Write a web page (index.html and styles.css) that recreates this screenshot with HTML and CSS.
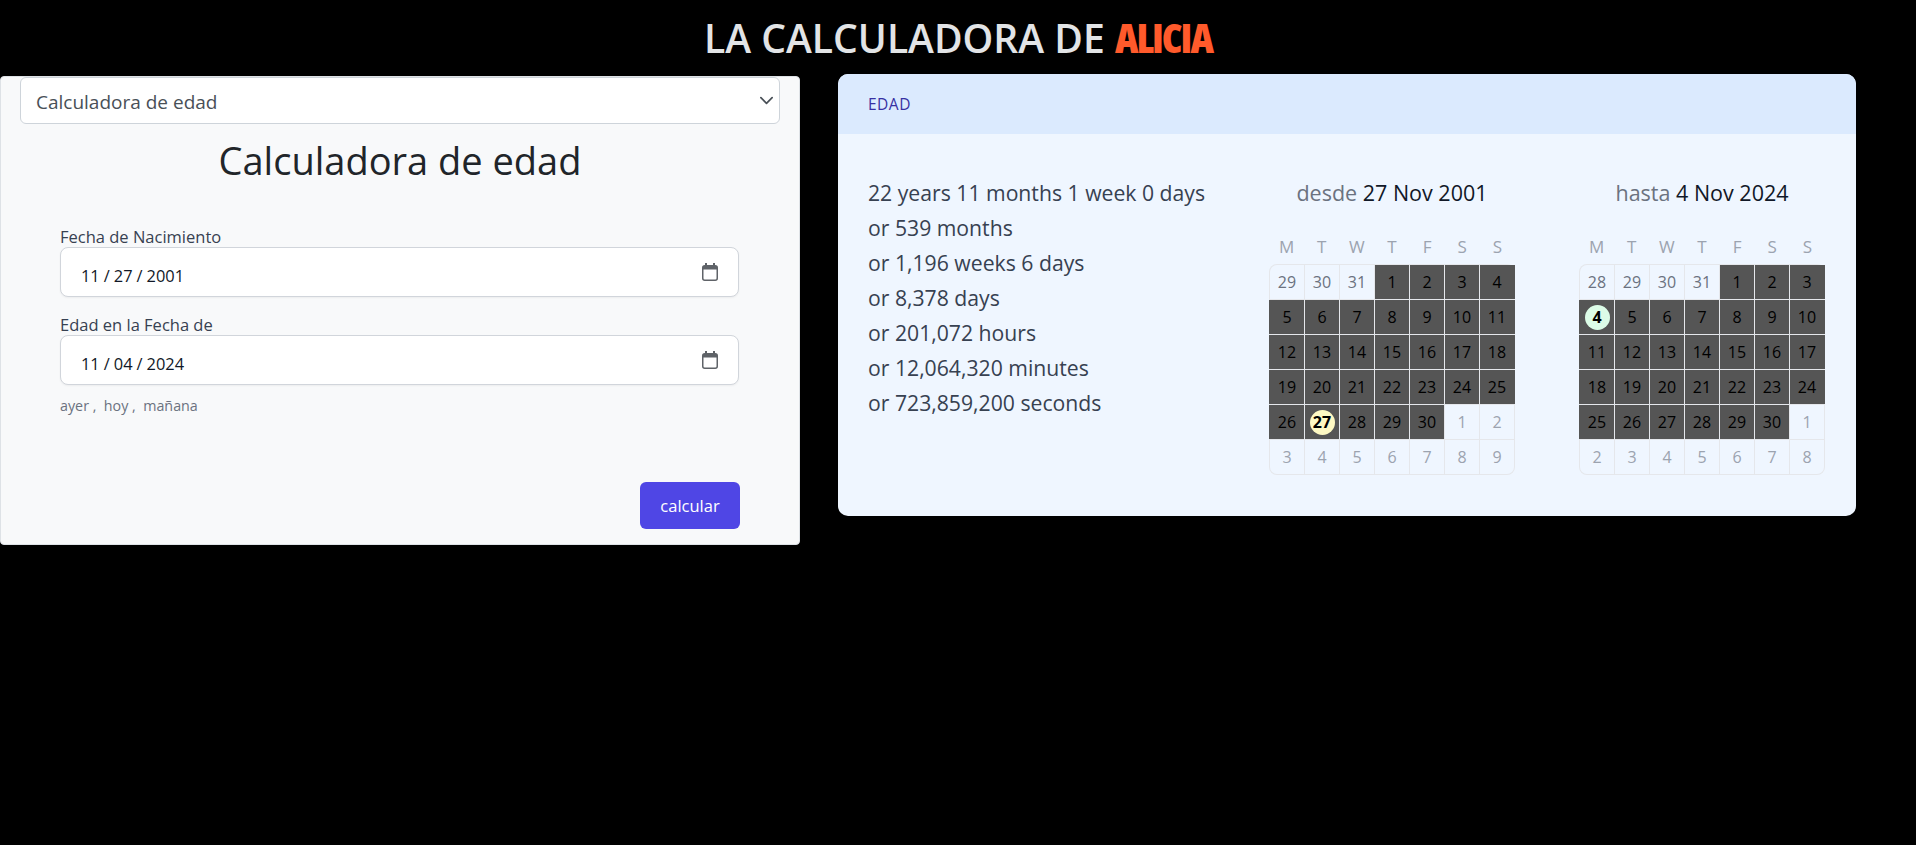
FILE: index.html
```html
<!DOCTYPE html>
<html lang="es">
<head>
<meta charset="utf-8">
<title>La calculadora de Alicia</title>
<link rel="stylesheet" href="styles.css">
</head>
<body>
<h1 class="site-title">LA CALCULADORA DE <span class="brand">ALICIA</span></h1>
<main class="layout">
  <section class="form-card">
    <select class="tool-select"><option>Calculadora de edad</option></select>
    <h2 class="form-title">Calculadora de edad</h2>
    <form class="form-body">
      <label class="field-label" for="birth">Fecha de Nacimiento</label>
      <input class="date-input first" id="birth" type="date" value="2001-11-27">
      <label class="field-label" for="at">Edad en la Fecha de</label>
      <input class="date-input" id="at" type="date" value="2024-11-04">
      <p class="shortcuts">ayer ,&nbsp; hoy ,&nbsp; mañana</p>
      <div class="actions"><button class="submit" type="button">calcular</button></div>
    </form>
  </section>
  <section class="result-card">
    <header class="result-head">EDAD</header>
    <div class="result-body">
      <div class="summary">
        <div>22 years 11 months 1 week 0 days</div>
        <div>or 539 months</div>
        <div>or 1,196 weeks 6 days</div>
        <div>or 8,378 days</div>
        <div>or 201,072 hours</div>
        <div>or 12,064,320 minutes</div>
        <div>or 723,859,200 seconds</div>
      </div>
      <div class="cal cal-from">
        <div class="cal-title"><span class="muted">desde</span> 27 Nov 2001</div>
        <div class="weekdays"><span>M</span><span>T</span><span>W</span><span>T</span><span>F</span><span>S</span><span>S</span></div>
        <div class="days">
          <div class="prev">29</div><div class="prev">30</div><div class="prev">31</div><div class="in">1</div><div class="in">2</div><div class="in">3</div><div class="in">4</div>
          <div class="in">5</div><div class="in">6</div><div class="in">7</div><div class="in">8</div><div class="in">9</div><div class="in">10</div><div class="in">11</div>
          <div class="in">12</div><div class="in">13</div><div class="in">14</div><div class="in">15</div><div class="in">16</div><div class="in">17</div><div class="in">18</div>
          <div class="in">19</div><div class="in">20</div><div class="in">21</div><div class="in">22</div><div class="in">23</div><div class="in">24</div><div class="in">25</div>
          <div class="in">26</div><div class="in"><b class="mark start">27</b></div><div class="in">28</div><div class="in">29</div><div class="in">30</div><div class="next">1</div><div class="next">2</div>
          <div class="next">3</div><div class="next">4</div><div class="next">5</div><div class="next">6</div><div class="next">7</div><div class="next">8</div><div class="next">9</div>
        </div>
      </div>
      <div class="cal cal-to">
        <div class="cal-title"><span class="muted">hasta</span> 4 Nov 2024</div>
        <div class="weekdays"><span>M</span><span>T</span><span>W</span><span>T</span><span>F</span><span>S</span><span>S</span></div>
        <div class="days">
          <div class="prev">28</div><div class="prev">29</div><div class="prev">30</div><div class="prev">31</div><div class="in">1</div><div class="in">2</div><div class="in">3</div>
          <div class="in"><b class="mark end">4</b></div><div class="in">5</div><div class="in">6</div><div class="in">7</div><div class="in">8</div><div class="in">9</div><div class="in">10</div>
          <div class="in">11</div><div class="in">12</div><div class="in">13</div><div class="in">14</div><div class="in">15</div><div class="in">16</div><div class="in">17</div>
          <div class="in">18</div><div class="in">19</div><div class="in">20</div><div class="in">21</div><div class="in">22</div><div class="in">23</div><div class="in">24</div>
          <div class="in">25</div><div class="in">26</div><div class="in">27</div><div class="in">28</div><div class="in">29</div><div class="in">30</div><div class="next">1</div>
          <div class="next">2</div><div class="next">3</div><div class="next">4</div><div class="next">5</div><div class="next">6</div><div class="next">7</div><div class="next">8</div>
        </div>
      </div>
    </div>
  </section>
</main>
</body>
</html>
```
FILE: styles.css
```css
* { box-sizing: border-box; }
html, body { margin: 0; padding: 0; }
body {
  background: #000;
  min-height: 845px;
  font-family: "Open Sans", "Noto Sans", sans-serif;
  color: #212529;
}
.site-title {
  margin: 0;
  height: 74px;
  padding-top: 11px;
  text-align: center;
  font-size: 39.1px;
  line-height: 52px;
  font-weight: 600;
  color: #e2e4e6;
  white-space: nowrap;
}
.brand {
  font-weight: 800;
  font-stretch: 75%;
  font-size: 41px;
  letter-spacing: -2px;
  color: #ff5a2b;
}
.layout { display: flex; align-items: flex-start; gap: 38px; }
.form-card {
  width: 800px;
  height: 469px;
  margin-top: 2px;
  padding: 0 19px;
  background: #f8f9fa;
  border: 1px solid #dee2e6;
  border-radius: 4px;
}
.tool-select {
  display: block;
  width: 760px;
  height: 47px;
  padding: 2px 40px 0 15px;
  appearance: none;
  font: 19px "Open Sans", sans-serif;
  color: #495057;
  background: #fff url("data:image/svg+xml,%3Csvg xmlns='http://www.w3.org/2000/svg' viewBox='0 0 16 16'%3E%3Cpath fill='none' stroke='%23495057' stroke-width='1.8' stroke-linecap='round' stroke-linejoin='round' d='m2 5 6 6 6-6'/%3E%3C/svg%3E") no-repeat right 5px center / 15px 15px;
  border: 1px solid #ced4da;
  border-radius: 6px;
}
.form-title {
  margin: 11px 0 0;
  text-align: center;
  font-size: 38px;
  line-height: 50px;
  font-weight: 400;
  color: #212529;
}
.form-body { padding: 41px 38px 0 40px; }
.field-label {
  display: block;
  font-size: 16.5px;
  line-height: 21px;
  color: #374151;
}
.date-input {
  display: block;
  width: 679px;
  height: 50px;
  margin-bottom: 11px;
  padding: 6px 20px 0 19px;
  font: 16.4px "Open Sans", sans-serif;
  color: #111827;
  background: #fff;
  border: 1px solid #d1d5db;
  border-radius: 8px;
  box-shadow: 0 1px 2px rgba(0,0,0,.05);
}
.date-input.first { margin-bottom: 17px; }
.date-input::-webkit-datetime-edit-text { padding: 0 3px; }
.date-input::-webkit-calendar-picker-indicator {
  width: 16px;
  height: 18px;
  padding: 0;
  margin: -6px 0 0;
  opacity: 1;
  background: url("data:image/svg+xml,%3Csvg xmlns='http://www.w3.org/2000/svg' viewBox='0 0 16 18'%3E%3Cpath fill='%235f6368' d='M3 0h2v3H3zM11 0h2v3h-2z'/%3E%3Crect x='.75' y='2.75' width='14.5' height='14.5' rx='2' fill='%23fff' stroke='%235f6368' stroke-width='1.5'/%3E%3Cpath fill='%235f6368' d='M1 3h14v3.5H1z'/%3E%3C/svg%3E") center / 16px 18px no-repeat;
}
.shortcuts {
  margin: 0;
  font-size: 14.3px;
  line-height: 20px;
  color: #6b7280;
}
.actions { display: flex; justify-content: flex-end; margin-top: 66px; }
.submit {
  width: 100px;
  height: 47px;
  margin-right: 2px;
  font: 16.5px "Open Sans", sans-serif;
  color: #fff;
  background: #4f46e5;
  border: 0;
  border-radius: 6px;
}
.result-card {
  width: 1018px;
  height: 442px;
  background: #eff6ff;
  border-radius: 10px;
  overflow: hidden;
}
.result-head {
  height: 60px;
  padding-left: 30px;
  font-size: 15.5px;
  letter-spacing: .5px;
  line-height: 60px;
  color: #3730a3;
  background: #dbeafe;
}
.result-body { display: flex; padding-left: 30px; }
.summary {
  width: 401px;
  padding-top: 41px;
  font-size: 21.2px;
  line-height: 35px;
  color: #374151;
}
.cal { width: 246px; }
.cal-from { margin-right: 64px; }
.cal-title {
  margin-top: 41px;
  text-align: center;
  font-size: 21.5px;
  line-height: 35px;
  color: #111827;
}
.muted { color: #6b7280; }
.weekdays {
  display: grid;
  grid-template-columns: repeat(7, 1fr);
  margin-top: 20px;
  height: 34px;
  font-size: 17px;
  line-height: 33px;
  text-align: center;
  color: #9ca3af;
}
.days {
  display: grid;
  grid-template-columns: repeat(7, 34px);
  grid-auto-rows: 34px;
  gap: 1px;
  padding: 1px;
  background: #e5e7eb;
  border-radius: 8px;
  font-size: 16px;
  text-align: center;
}
.days > div { display: flex; align-items: center; justify-content: center; }
.days > div:first-child { border-top-left-radius: 7px; }
.days > div:nth-child(36) { border-bottom-left-radius: 7px; }
.days > div:last-child { border-bottom-right-radius: 7px; }
.prev { background: #eff6ff; color: #6b7280; }
.next { background: #eff6ff; color: #9ca3af; }
.in { background: #555; color: #000; }
.in:nth-child(7n) { box-shadow: 1px 0 0 #555; }
.in:nth-child(7n+1) { box-shadow: -1px 0 0 #555; }
.mark {
  display: flex;
  align-items: center;
  justify-content: center;
  width: 25px;
  height: 25px;
  border-radius: 50%;
  color: #000;
}
.start { background: #fef9c3; }
.end { background: #dcfce7; }
```
